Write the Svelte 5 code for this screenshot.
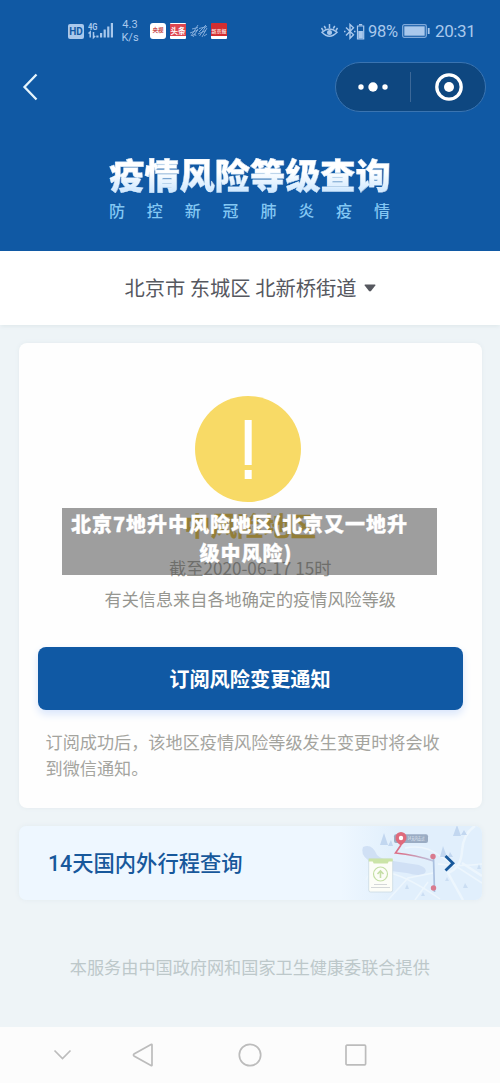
<script>
  const source = '有关信息来自各地确定的疫情风险等级';
  const subtitle = [...'防控新冠肺炎疫情'];
</script>

<div class="screen">
  <header>
    <div class="status">
      <div class="left">
        <span class="hd">HD</span>
        <svg class="signal" width="26" height="18" viewBox="0 0 26 18">
          <text x="0" y="7.500" font-size="8.500" font-weight="700" textLength="9.500" lengthAdjust="spacingAndGlyphs" fill="#a9c8ec">4G</text>
          <g stroke="#a9c8ec" stroke-width="1.500" fill="none">
            <path d="M.5 11.500 2.200 10v5.500M5.500 10v5.500l1.700-1.500" />
          </g>
          <g fill="#a9c8ec">
            <rect x="8.300" y="13.500" width="2.200" height="2" /><rect x="12" y="11" width="2.200" height="4.500" />
            <rect x="15.600" y="7.500" width="2.200" height="8" /><rect x="19.200" y="4.500" width="2.200" height="11" />
            <rect x="22.800" y="1" width="2.200" height="14.500" />
          </g>
        </svg>
        <span class="speed">4.3<br />K/s</span>
        <span class="app white"><i>央视</i></span>
        <span class="app news"><i>头条</i></span>
        <svg class="scribble" width="18" height="14" viewBox="0 0 18 14" fill="none" stroke="#8bb2df" stroke-width=".9">
          <path d="M1 12 8 1M2 5l6-1.500M0 9l8-3M3 13l5-8M2 12q3-4 4 0M9 8l7-7M9 4.500l8-2M9.500 12l6-9M8 10l8-3.500M12 13l5-9M14 12l3-2" />
        </svg>
        <span class="app paper"><i>新京报</i></span>
      </div>
      <div class="right">
        <svg width="17" height="16" viewBox="0 0 17 16" fill="none" stroke="#a9c8ec" stroke-width="1.500">
          <path d="M1 9.200Q8.500 2.800 16 9.200Q8.500 17.200 1 9.200ZM8.500 1v4M3.200 3l1.500 2.500M13.800 3l-1.500 2.500M.5 5l1.500 2.500M16.500 5 15 7.500" />
          <circle cx="8.500" cy="9.600" r="2.500" fill="#a9c8ec" stroke="none" />
        </svg>
        <svg class="bt" width="21" height="17" viewBox="0 0 21 17" fill="none" stroke="#a9c8ec" stroke-width="1.400">
          <path d="M2 4.500l7.500 7.300-3.500 3.500V1.500l3.500 3.300L2 12.500M0 8.500h1.500M10 8.500h1.500" />
          <path d="M13.500 3h6.200v12.800h-6.200zM15 1.600h3.200" stroke-width="1.200" />
          <path d="M14.300 8h4.600v7h-4.600z" fill="#a9c8ec" stroke="none" />
        </svg>
        <span class="pct">98%</span>
        <svg class="bat" width="28" height="14" viewBox="0 0 28 14">
          <rect x=".7" y=".7" width="23.600" height="12.600" rx="1.500" fill="none" stroke="#7fa9da" stroke-width="1.300" />
          <rect x="2.300" y="2.300" width="20.400" height="9.400" fill="#a9c8ec" />
          <rect x="25.800" y="4" width="1.800" height="6" fill="#a9c8ec" />
        </svg>
        <span class="time">20:31</span>
      </div>
    </div>
    <div class="nav">
      <svg width="16" height="28" viewBox="0 0 16 28" fill="none" stroke="#e6f5fc" stroke-width="2.300">
        <path d="M14.500 1.500 2.500 14l12 12.500" />
      </svg>
      <div class="capsule">
        <svg width="30" height="10" viewBox="0 0 30 10" fill="#fff">
          <circle cx="3" cy="5" r="2.700" /><circle cx="15" cy="5" r="4.700" /><circle cx="27" cy="5" r="2.700" />
        </svg>
        <span class="divider"></span>
        <svg width="28" height="28" viewBox="0 0 28 28">
          <circle cx="14" cy="14" r="12.200" fill="none" stroke="#fff" stroke-width="3.300" />
          <circle cx="14" cy="14" r="5" fill="#fff" />
        </svg>
      </div>
    </div>
    <h1>疫情风险等级查询</h1>
    <div class="subtitle">
      {#each subtitle as char}<span>{char}</span>{/each}
    </div>
  </header>

  <div class="region">
    <span>北京市 东城区 北新桥街道</span>
    <svg width="12" height="8" viewBox="0 0 12 8"><path d="M1 .5h10q.8.300.3 1L7 7Q6 7.800 5 7L.7 1.500Q.2.800 1 .5Z" fill="#56585f" /></svg>
  </div>

  <main>
    <section class="card">
      <svg class="warn" width="106" height="106" viewBox="0 0 106 106">
        <circle cx="53" cy="53" r="53" fill="#f8da66" />
        <path d="M49.700 24h7v45h-7zM49.700 74h7v9h-7z" fill="#fff" />
      </svg>
      <div class="level">中风险地区</div>
      <div class="date">截至2020-06-17 15时</div>
      <div class="source">{source}</div>
      <div class="caption">
        <div class="first">北京7地升中风险地区(北京又一地升</div>
        <div class="second">级中风险)</div>
      </div>
      <button>订阅风险变更通知</button>
      <p>订阅成功后，该地区疫情风险等级发生变更时将会收到微信通知。</p>
    </section>

    <section class="trip">
      <span class="trip-title">14天国内外行程查询</span>
      <svg width="142" height="74" viewBox="0 0 142 74">
        <defs>
          <linearGradient id="mapFade"><stop offset="0" stop-color="#e1effc" stop-opacity="0" /><stop offset=".4" stop-color="#e1effc" /></linearGradient>
          <linearGradient id="route" gradientUnits="userSpaceOnUse" x1="60" y1="0" x2="94" y2="0"><stop offset="0" stop-color="#dc7189" /><stop offset="1" stop-color="#b9c9e5" /></linearGradient>
        </defs>
        <rect width="142" height="74" fill="url(#mapFade)" />
        <path d="M23 21q9-4 14 8 5 5 16 6l26 4q9 3 6 8-5 4-18 0L43 44q-12-2-15-10-8-6-5-13Z" fill="#d0e0f5" />
        <g fill="none" stroke="#edf6fd" stroke-width="1.500">
          <path d="M26 54q4-12 24-7t50 26M65 22q20-4 35 8l42 27M98 38q24 3 44 0M48 74l20-22 25-5M75 74l13-18" />
          <path d="M135 0q-12 8-13 25t-14 22l15 27M122 37l20 13" stroke-width="2.500" />
        </g>
        <g fill="#c2d7f0">
          <path d="m44 7 4 12H40zM51 14l2 6h-5zM117-1l4 11h-8zM124 4l3 5h-6zM103 20l4 11h-7zM110 26l3 5h-5z" />
          <path d="m67 58 2 5h-4zM125 57l3 5h-5zM83 66l2 4h-4zM139 38l2 5h-4zM107 51l2 4h-4z" opacity=".7" />
        </g>
        <rect x="54" y="8.300" width="34" height="8.700" rx="2" fill="#9aacc3" />
        <text x="67.500" y="14.400" textLength="17" lengthAdjust="spacingAndGlyphs" font-size="4.500" fill="#e2eaf3">14天内去过</text>
        <path d="M61 19l-5.500 8Q76 29 93.500 35" fill="none" stroke="url(#route)" stroke-width="1.700" />
        <path d="M93.500 31l1 35" stroke="#aac0df" stroke-width="1.700" />
        <path d="M61 19.500q-6-4-5.500-8a5.500 5.500 0 0 1 11 0q0 4-5.500 8Z" fill="#df6a7c" />
        <circle cx="61" cy="12" r="2.200" fill="#fff" />
        <circle cx="93" cy="30.500" r="2.700" fill="#d97b8e" /><circle cx="93.500" cy="62" r="2.700" fill="#d97b8e" />
        <rect x="28.700" y="33" width="24" height="33" rx="2" fill="#fcfdf8" stroke="#cad9e2" stroke-width=".8" />
        <path d="M28.700 32.500h24v3h-4l-1 2h-14l-1-2h-4z" fill="#cbe4a8" />
        <g fill="none" stroke="#c5dfa6" stroke-width="1.200"><circle cx="40.500" cy="48" r="7" /><path d="M40.500 52v-7M37.500 48l3-3 3 3" stroke-width="1.600" /></g>
        <path d="M34 58.500h13M31 61.500h19" stroke="#d4d7d9" />
        <path d="m105.500 30 7.500 7.200-7.500 7.300" fill="none" stroke="#17589b" stroke-width="2.800" />
      </svg>
    </section>

    <div class="provider">本服务由中国政府网和国家卫生健康委联合提供</div>
  </main>

  <footer>
    <svg width="20" height="24" viewBox="0 0 20 24"><path d="m1.500 7.500 8 8 8-8" /></svg>
    <svg width="22" height="24" viewBox="0 0 22 24"><path d="M20 1.800v20.400q0 .8-1 .3L2 13q-1-1 0-2L19 1.500q1-.5 1 .3Z" /></svg>
    <svg width="24" height="24" viewBox="0 0 24 24"><circle cx="12" cy="12" r="10.700" /></svg>
    <svg width="22" height="24" viewBox="0 0 22 24"><rect x="1" y="2.200" width="19.600" height="19.600" rx="1" /></svg>
  </footer>
</div>

<style>
  :global(body) { margin: 0; }
  .screen {
    width: 500px; height: 1083px; overflow: hidden;
    display: flex; flex-direction: column;
    background: #eef4f7;
    font-family: "Noto Sans CJK SC", sans-serif;
  }
  svg { display: block; flex: none; }
  header { height: 251px; background: #1059a4; }
  .status { height: 62px; display: flex; justify-content: space-between; box-sizing: border-box; padding: 0 24px 0 68px; font-family: Roboto, sans-serif; color: #a9c8ec; }
  .left, .right { display: flex; align-items: center; }
  .hd { width: 16px; height: 15px; border-radius: 2px; background: #a9c8ec; color: #1059a4; font: 700 10px/15px Roboto, sans-serif; text-align: center; }
  .signal { margin-left: 4px; }
  .speed { width: 24px; margin-left: 4px; text-align: center; font-size: 11px; line-height: 13px; }
  .app { width: 16px; height: 16px; margin-left: 8px; border-radius: 3px; overflow: hidden; font-family: "Noto Sans CJK SC", sans-serif; text-align: center; display: flex; align-items: center; justify-content: center; }
  .app i { font-style: normal; font-weight: 700; line-height: 1; white-space: nowrap; }
  .white { background: #fff; color: #c84d50; font-size: 5.500px; }
  .news { margin-left: 4px; background: linear-gradient(#fff 1px, #de4650 1px 13px, #fff 13px); color: #fff; font-size: 7.500px; border-radius: 1px; }
  .scribble { margin-left: 4px; }
  .paper { margin-left: 3px; background: linear-gradient(#d22e31 0 13px, #fff 13px); color: #f6d9d5; font-size: 5px; border-radius: 1px; }
  .paper i { position: relative; top: -1px; }
  .bt { margin-left: 6px; }
  .pct { margin-left: 3px; font-size: 16.500px; width: 31px; letter-spacing: -.3px; }
  .bat { margin-left: 3px; }
  .time { margin-left: 5px; font-size: 17px; letter-spacing: -.4px; width: 41px; }
  .nav { display: flex; justify-content: space-between; align-items: center; height: 50px; padding: 0 14px 0 22px; }
  .capsule { box-sizing: border-box; width: 151px; height: 50px; border: 1px solid #3a74b1; border-radius: 25px; background: #0e4780; display: flex; align-items: center; padding: 0 21px 0 22px; }
  .divider { width: 1px; height: 30px; background: #3c6898; margin: 0 24px 0 22px; }
  h1 { margin: 40px 0 0; text-align: center; font-size: 35.200px; line-height: 44px; font-weight: 900; background: linear-gradient(#fff 45%, #cfe8ff 90%); -webkit-background-clip: text; background-clip: text; color: transparent; -webkit-text-stroke: .3px #e6f4ff; }
  .subtitle { margin: 2px 110px 0 109px; display: flex; justify-content: space-between; color: #83c7f3; font-size: 16px; line-height: 24px; font-weight: 500; }
  .region { height: 74px; background: #fff; color: #56585f; display: flex; align-items: center; justify-content: center; gap: 7px; font-size: 20.300px; line-height: 30px; box-shadow: 0 3px 3px -1px #e3ebee; }
  .region span { position: relative; top: -1px; }
  main { height: 702px; box-sizing: border-box; padding: 18px 18px 0 19px; }
  .card { position: relative; height: 465px; box-sizing: border-box; padding: 53.400px 19px 0 18.500px; border-radius: 8px; background: #fefefe; box-shadow: 0 0 4px #e2eaee; text-align: center; }
  .warn { margin: 0 auto; position: relative; left: -2.500px; }
  .level { margin-top: 6px; font-size: 26.400px; line-height: 34px; font-weight: 700; color: #e7ba1f; -webkit-text-stroke: .3px #e7ba1f; }
  .date, .source { font-size: 17.150px; line-height: 30px; color: #969690; }
  .date { margin-top: 10.500px; }
  .source { margin-top: 1.500px; }
  .caption { position: absolute; left: 43px; top: 165px; width: 375px; height: 67px; box-sizing: border-box; padding-top: 2px; background: rgba(75, 75, 75, .54); color: #fff; font-size: 20px; line-height: 28.500px; font-weight: 900; letter-spacing: 1px; white-space: nowrap; -webkit-text-stroke: .3px #fff; }
  .first { padding-right: 20px; }
  .second { padding-right: 7px; }
  button { display: block; width: 425px; height: 63px; margin: 33px 0 0; padding: 0; border: 0; border-radius: 8px; background: #1059a4; color: #fff; font: 700 20.200px/62px "Noto Sans CJK SC", sans-serif; box-shadow: 0 4px 8px #d7e4fb; }
  p { margin: 19px 7px 0 8px; width: 400px; text-align: left; font-size: 17.150px; line-height: 26px; color: #a4a49e; }
  .trip { height: 74px; margin-top: 18px; border-radius: 7px; overflow: hidden; background: #eef7ff; box-shadow: 0 0 5px #e2eaef; display: flex; align-items: center; justify-content: space-between; padding-left: 29px; }
  .trip-title { font-family: Roboto, "Noto Sans CJK SC", sans-serif; font-size: 21.300px; line-height: 30px; padding-top: 1px; font-weight: 500; color: #17589b; white-space: nowrap; }
  .provider { margin-top: 52px; text-align: center; font-size: 17.150px; line-height: 30px; color: #bdc8ca; position: relative; left: -.7px; }
  footer { flex: 1; background: #fcfcfc; display: grid; grid-template-columns: 125px 36px 178px 34px; justify-items: center; align-items: center; }
  footer svg { fill: none; stroke: #bcbcbc; stroke-width: 1.700; }
</style>
